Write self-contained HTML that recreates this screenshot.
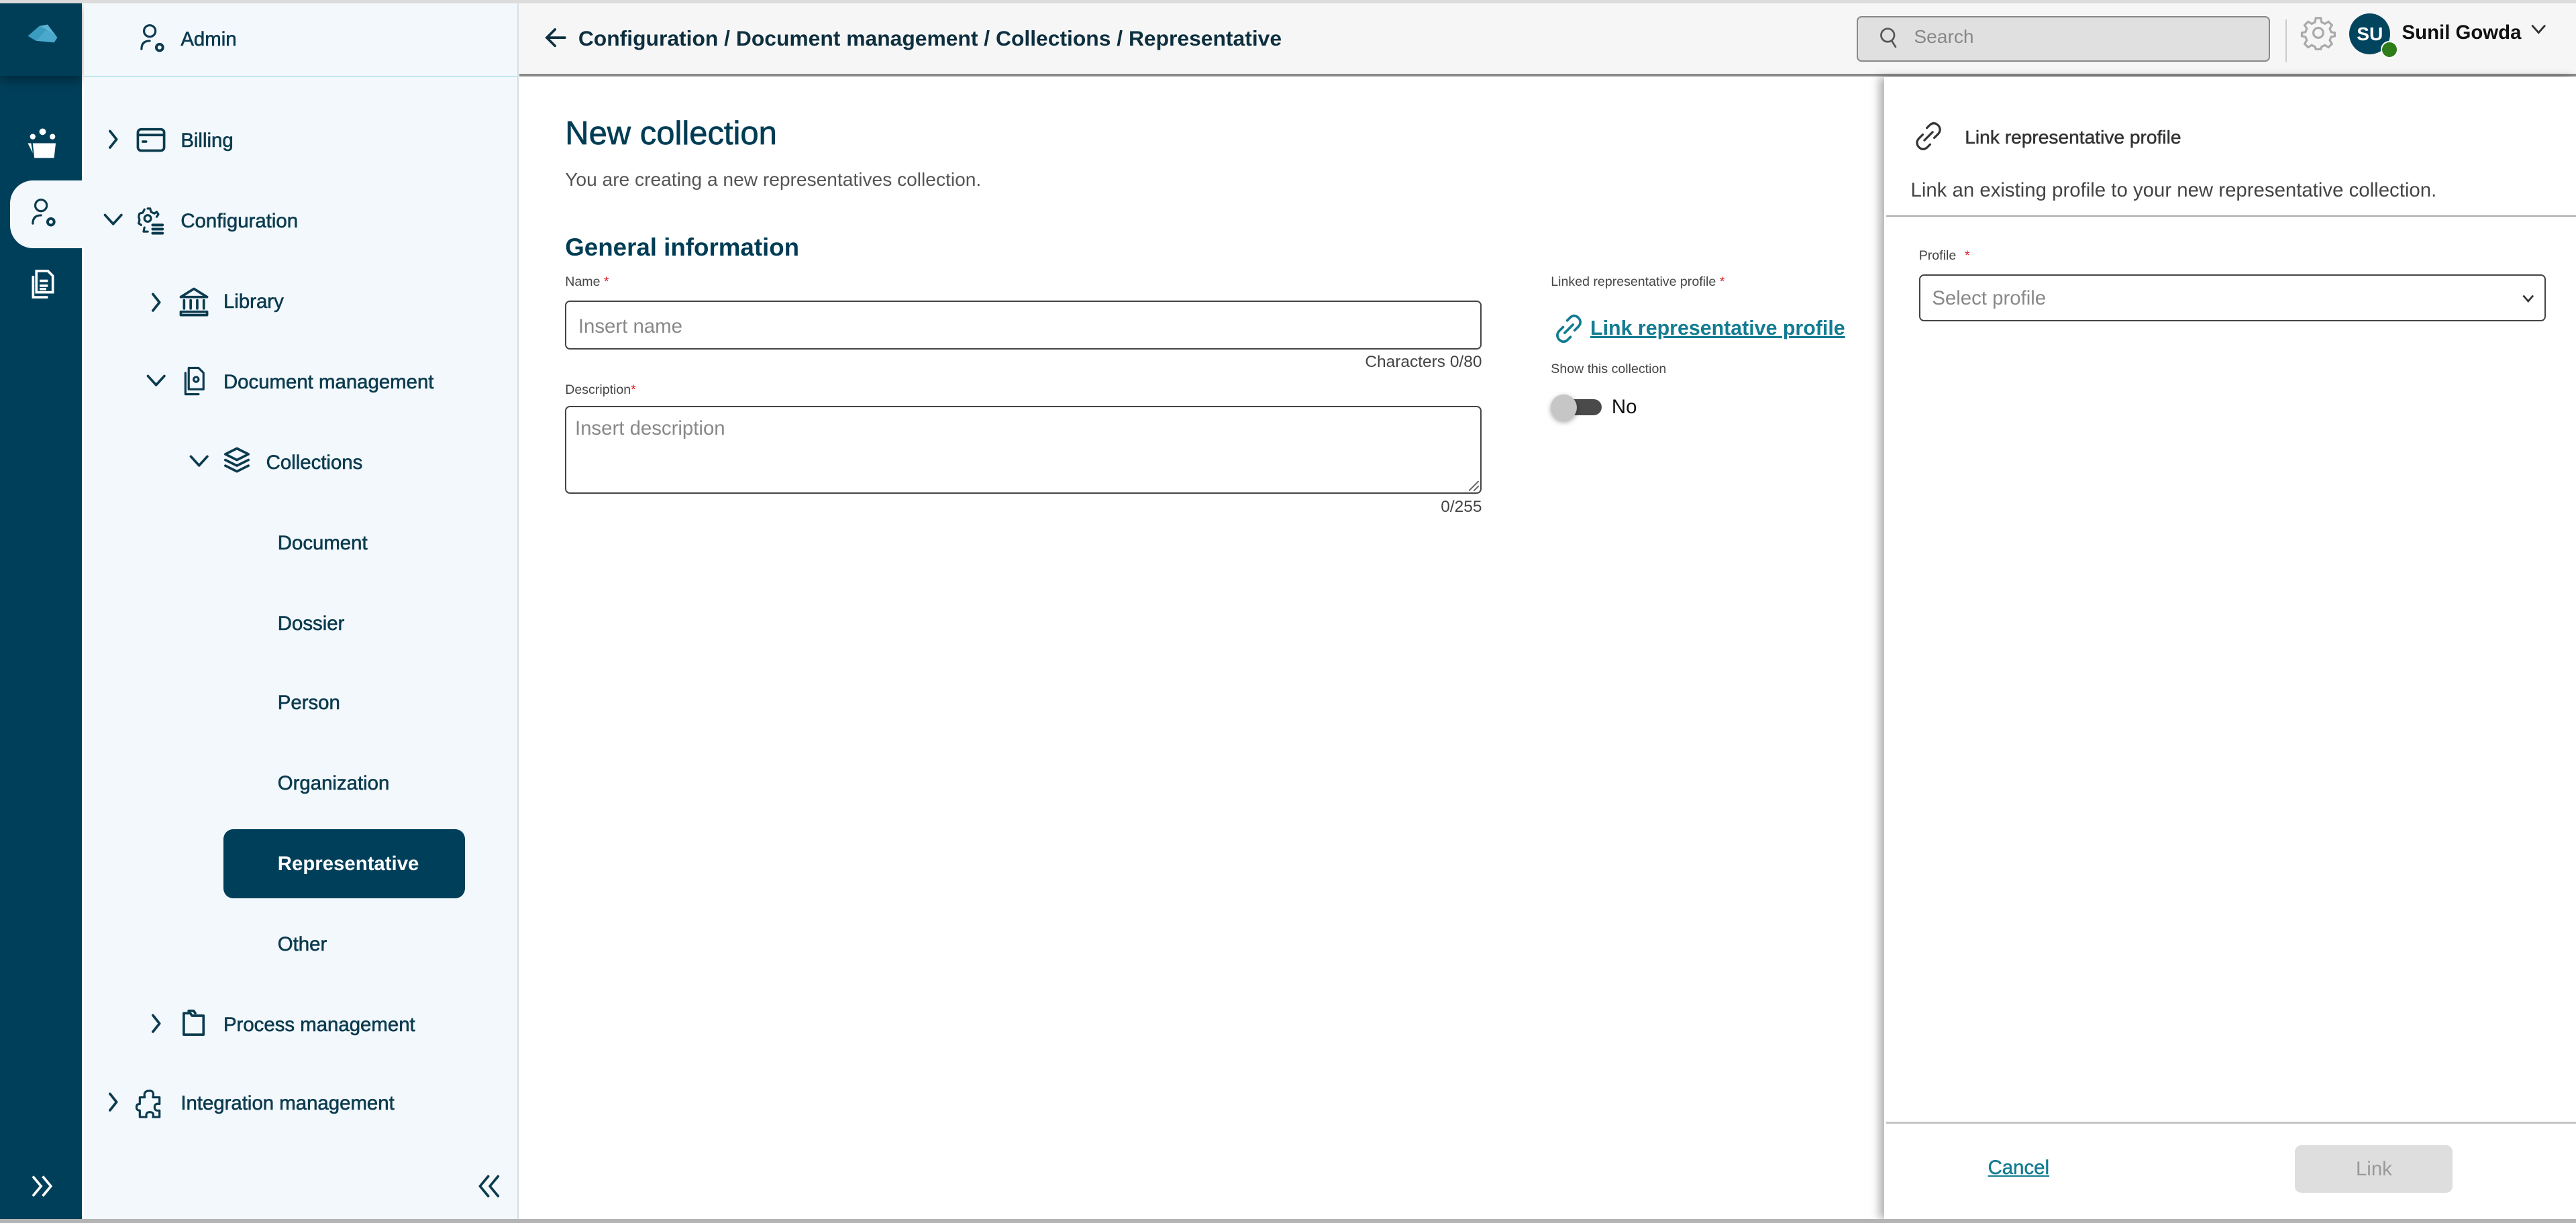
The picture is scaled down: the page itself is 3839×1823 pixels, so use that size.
<!DOCTYPE html>
<html><head><meta charset="utf-8"><style>
html,body{margin:0;padding:0;width:3839px;height:1823px;overflow:hidden;background:#fff;font-family:"Liberation Sans",sans-serif}
#w{zoom:2.4484;position:relative;width:1568px;height:745px;overflow:hidden;background:#fff}
.a{position:absolute}
.nav{color:#0b3b4f;font-size:12px;font-weight:400;white-space:nowrap;line-height:14px;margin-top:1px;-webkit-text-stroke:0.25px #0b3b4f}
.ic{position:absolute;fill:none;stroke:#0b3b4f;stroke-width:1.5;stroke-linecap:round;stroke-linejoin:round}
.lbl{font-size:8px;color:#444}
.req{color:#e0202a;font-size:8px;vertical-align:top}
</style></head><body><div id="w">
<div class="a" style="left:0;top:0;width:1568px;height:2px;background:#dcdcdc;z-index:5"></div>
<div class="a" style="left:0;top:0;width:50px;height:742px;background:#003f5a"></div>
<div class="a" style="left:0;top:0;width:50px;height:46px;background:#003e58;box-shadow:0 3px 6px rgba(0,0,0,.35)"></div>
<svg class="a" style="left:16px;top:14px" width="20" height="16" viewBox="0 0 20 16"><path d="M1 8 L8 2 L12 4 L6 11Z" fill="#3a9cc0"/><path d="M8 2 L13 1 L19 9 L12 4Z" fill="#5cb4d4"/><path d="M6 11 L12 4 L19 9 L17 12 Z" fill="#4aa8cc"/></svg>
<svg class="a" style="left:16px;top:77px" width="20" height="20" viewBox="0 0 20 20"><circle cx="10" cy="3" r="2" fill="#fff"/><circle cx="4" cy="6" r="1.7" fill="#fff"/><circle cx="16" cy="6" r="1.7" fill="#fff"/><path d="M4 10 H18 L17 19 H5Z" fill="#fff"/><path d="M1 10 H3 L4 16Z" fill="#fff"/></svg>
<div class="a" style="left:6px;top:110px;width:45px;height:41px;background:#f3f8fc;border-radius:14px 0 0 14px"></div>
<svg class="ic" style="left:18px;top:120px;stroke-width:1.3" width="18" height="20" viewBox="0 0 18 20"><circle cx="7" cy="5" r="3.5"/><path d="M2 16 Q2 11 7 11"/><circle cx="13" cy="15" r="2" stroke-width="1.6"/></svg>
<svg class="a" style="left:17px;top:163px" width="18" height="20" viewBox="0 0 18 20" fill="none" stroke="#fff" stroke-width="1.5"><path d="M5 2 H12 L15 5 V15 H5Z"/><path d="M3 5 V18 H12"/><path d="M7 8 H12 M7 11 H12 M7 13 H11"/></svg>
<svg class="a" style="left:18px;top:715px" width="16" height="14" viewBox="0 0 16 14" fill="none" stroke="#fff" stroke-width="1.5"><path d="M2 1 L7 7 L2 13 M8 1 L13 7 L8 13"/></svg>
<div class="a" style="left:51px;top:0;width:264px;height:742px;background:#f3f8fc;border-right:1px solid #d8dde0"></div>
<div class="a" style="left:51px;top:46px;width:264px;height:1px;background:#c2e5f0"></div>
<svg class="ic" style="left:84px;top:14px;stroke-width:1.3" width="18" height="20" viewBox="0 0 18 20"><circle cx="7" cy="5" r="3.5"/><path d="M2 16 Q2 11 7 11"/><circle cx="13" cy="15" r="2" stroke-width="1.6"/></svg>
<div class="a nav" style="left:110px;top:16px">Admin</div>

<svg class="ic" style="left:65px;top:79px" width="8" height="12" viewBox="0 0 8 12"><path d="M2 1 L6 6 L2 11"/></svg>
<svg class="ic" style="left:83px;top:77px" width="18" height="16" viewBox="0 0 18 16"><rect x="1" y="1.5" width="16" height="13" rx="2"/><path d="M1 5 H17 M4 9 H6"/></svg>
<div class="a nav" style="left:110px;top:78px">Billing</div>

<svg class="ic" style="left:63px;top:130px" width="12" height="8" viewBox="0 0 12 8"><path d="M1 1 L6 6.5 L11 1"/></svg>
<svg class="ic" style="left:83px;top:125px;stroke-width:1.3" width="18" height="19" viewBox="0 0 18 19"><circle cx="7" cy="8" r="2"/><path d="M7 2 L8.5 2 L9 4 L11 5 L12.5 4 L13.5 5.5 L12.5 7 M3 12 L1.5 11 L2 9 L1.5 7 L2 5 L4 4.5 L5 2.5 M5 13.5 L4.5 16 L7 16"/><path d="M10 12 H16 M10 14.5 H16 M10 17 H16" stroke-width="1.6"/></svg>
<div class="a nav" style="left:110px;top:127px">Configuration</div>

<svg class="ic" style="left:91px;top:178px" width="8" height="12" viewBox="0 0 8 12"><path d="M2 1 L6 6 L2 11"/></svg>
<svg class="ic" style="left:109px;top:175px" width="18" height="18" viewBox="0 0 18 18"><path d="M1 6 L9 1 L17 6 Z M3 8 V13 M7 8 V13 M11 8 V13 M15 8 V13"/><rect x="1" y="15" width="16" height="2"/></svg>
<div class="a nav" style="left:136px;top:176px">Library</div>

<svg class="ic" style="left:89px;top:228px" width="12" height="8" viewBox="0 0 12 8"><path d="M1 1 L6 6.5 L11 1"/></svg>
<svg class="ic" style="left:110px;top:223px;stroke-width:1.3" width="16" height="19" viewBox="0 0 16 19"><path d="M5 1 H11 L14 4 V14 H5Z"/><path d="M3 4 V17 H11"/><circle cx="9.5" cy="8" r="1.5"/></svg>
<div class="a nav" style="left:136px;top:225px">Document management</div>

<svg class="ic" style="left:115px;top:277px" width="12" height="8" viewBox="0 0 12 8"><path d="M1 1 L6 6.5 L11 1"/></svg>
<svg class="ic" style="left:135px;top:272px" width="18" height="18" viewBox="0 0 18 18"><path d="M9 1 L16 4.5 L9 8 L2 4.5Z M2 8 L9 11.5 L16 8 M2 11.5 L9 15 L16 11.5"/></svg>
<div class="a nav" style="left:162px;top:274px">Collections</div>

<div class="a nav" style="left:169px;top:323px">Document</div>
<div class="a nav" style="left:169px;top:372px">Dossier</div>
<div class="a nav" style="left:169px;top:420px">Person</div>
<div class="a nav" style="left:169px;top:469px">Organization</div>
<div class="a" style="left:136px;top:505px;width:147px;height:42px;background:#003f5a;border-radius:6px"></div>
<div class="a nav" style="left:169px;top:518px;color:#fff;font-weight:700;-webkit-text-stroke:0">Representative</div>
<div class="a nav" style="left:169px;top:567px">Other</div>

<svg class="ic" style="left:91px;top:617px" width="8" height="12" viewBox="0 0 8 12"><path d="M2 1 L6 6 L2 11"/></svg>
<svg class="ic" style="left:110px;top:614px" width="16" height="18" viewBox="0 0 16 18"><path d="M2 3 H6 L7 4.5 H14 V16 H2Z"/><path d="M5 3 V1.5 H8 L9 3" /></svg>
<div class="a nav" style="left:136px;top:616px">Process management</div>

<svg class="ic" style="left:65px;top:665px" width="8" height="12" viewBox="0 0 8 12"><path d="M2 1 L6 6 L2 11"/></svg>
<svg class="ic" style="left:82px;top:662px;stroke-width:1.3" width="18" height="20" viewBox="0 0 18 20"><path d="M3 6 H6 Q5 2 9 2 Q12 2 11 6 H15 V10 Q12 9.5 12 12 Q12 14.5 15 14 V18 H11 Q12 15 9 15 Q6.5 15 7 18 H3 V14 Q1 14 1 12 Q1 10 3 10Z"/></svg>
<div class="a nav" style="left:110px;top:664px">Integration management</div>

<svg class="ic" style="left:289px;top:715px" width="16" height="14" viewBox="0 0 16 14"><path d="M8 1 L3 7 L8 13 M14 1 L9 7 L14 13"/></svg>

<div class="a" style="left:316px;top:0;width:1252px;height:45px;background:#f6f6f6;border-bottom:2px solid #8a8a8a"></div>
<svg class="a" style="left:331px;top:16px" width="14" height="14" viewBox="0 0 14 14" fill="none" stroke="#0d2f3f" stroke-width="1.5" stroke-linecap="round"><path d="M13 7 H2 M7 2 L2 7 L7 12"/></svg>
<div class="a" style="left:352px;top:16px;font-size:13px;font-weight:700;color:#0d2f3f;white-space:nowrap">Configuration / Document management / Collections / Representative</div>
<div class="a" style="left:1130px;top:10px;width:250px;height:26px;background:#e0e0e0;border:1px solid #888;border-radius:3px"></div>
<svg class="a" style="left:1144px;top:16px" width="12" height="14" viewBox="0 0 12 14" fill="none" stroke="#555" stroke-width="1.1"><circle cx="5" cy="5.5" r="4"/><path d="M7.5 9 L10 13"/></svg>
<div class="a" style="left:1165px;top:16px;font-size:11.5px;color:#888">Search</div>
<div class="a" style="left:1391px;top:12px;width:1px;height:26px;background:#ccc"></div>
<svg class="a" style="left:1400px;top:9px" width="22" height="22" viewBox="0 0 22 22" fill="none" stroke="#aaa" stroke-width="1.3"><circle cx="11" cy="11" r="3"/><path d="M9.5 2 H12.5 L13 4.5 L15 5.5 L17.2 4.2 L19.3 6.3 L18 8.5 L18.8 10.5 L21 11 V13 L18.8 13.5 L18 15.5 L19.3 17.7 L17.2 19.8 L15 18.5 L13 19.5 L12.5 21 H9.5 L9 19.5 L7 18.5 L4.8 19.8 L2.7 17.7 L4 15.5 L3.2 13.5 L1 13 V11 L3.2 10.5 L4 8.5 L2.7 6.3 L4.8 4.2 L7 5.5 L9 4.5Z"/></svg>
<div class="a" style="left:1430px;top:8px;width:25px;height:25px;border-radius:50%;background:#00445e;color:#fff;font-size:11.5px;font-weight:700;text-align:center;line-height:25px">SU</div>
<div class="a" style="left:1449px;top:25px;width:9px;height:9px;border-radius:50%;background:#2f7d1a;border:1px solid #fff"></div>
<div class="a" style="left:1462px;top:13px;font-size:12px;font-weight:700;color:#111">Sunil Gowda</div>
<svg class="a" style="left:1540px;top:14px" width="10" height="8" viewBox="0 0 10 8" fill="none" stroke="#333" stroke-width="1.2"><path d="M1 1.5 L5 6 L9 1.5"/></svg>

<div class="a" style="left:344px;top:70px;font-size:20px;color:#003d55;-webkit-text-stroke:0.3px #003d55">New collection</div>
<div class="a" style="left:344px;top:103px;font-size:11.5px;color:#555">You are creating a new representatives collection.</div>
<div class="a" style="left:344px;top:142px;font-size:15px;color:#003d55;font-weight:600">General information</div>
<div class="a lbl" style="left:344px;top:167px">Name <span class="req">*</span></div>
<div class="a" style="left:344px;top:183px;width:556px;height:28px;border:1px solid #444;border-radius:3px"></div>
<div class="a" style="left:352px;top:192px;font-size:12px;color:#888">Insert name</div>
<div class="a" style="left:780px;top:215px;width:122px;text-align:right;font-size:10px;color:#444">Characters 0/80</div>
<div class="a lbl" style="left:344px;top:233px">Description<span class="req" style="vertical-align:baseline">*</span></div>
<div class="a" style="left:344px;top:247px;width:556px;height:52px;border:1px solid #444;border-radius:3px"></div>
<div class="a" style="left:350px;top:254px;font-size:12px;color:#888">Insert description</div>
<svg class="a" style="left:894px;top:293px" width="6" height="6" viewBox="0 0 6 6" stroke="#666" stroke-width=".8"><path d="M0 6 L6 0 M3 6 L6 3"/></svg>
<div class="a" style="left:800px;top:303px;width:102px;text-align:right;font-size:10px;color:#444">0/255</div>

<div class="a lbl" style="left:944px;top:167px">Linked representative profile <span class="req">*</span></div>
<svg class="a" style="left:946px;top:191px" width="18" height="18" viewBox="0 0 18 18" fill="none" stroke="#137c92" stroke-width="1.5" stroke-linecap="round"><path d="M8 4 L10 2 Q12.5 0 15 2.5 Q17 5 15 7.5 L12.5 10 M10 14 L8 16 Q5.5 18 3 15.5 Q1 13 3 10.5 L5.5 8 M6.5 11.5 L11.5 6.5"/></svg>
<div class="a" style="left:968px;top:193px;font-size:12.4px;font-weight:700;color:#137c92;text-decoration:underline;white-space:nowrap">Link representative profile</div>
<div class="a lbl" style="left:944px;top:220px">Show this collection</div>
<div class="a" style="left:950px;top:243px;width:25px;height:10px;border-radius:5px;background:#4a4a4a"></div>
<div class="a" style="left:944px;top:240px;width:16px;height:16px;border-radius:50%;background:#c6c6c6;box-shadow:0 1px 3px rgba(0,0,0,.35)"></div>
<div class="a" style="left:981px;top:241px;font-size:12px;color:#111">No</div>

<div class="a" style="left:1147px;top:47px;width:421px;height:695px;background:#fff;box-shadow:-3px 0 5px rgba(0,0,0,.3)"></div>
<svg class="a" style="left:1165px;top:74px" width="18" height="18" viewBox="0 0 18 18" fill="none" stroke="#333" stroke-width="1.3" stroke-linecap="round"><path d="M8 4 L10 2 Q12.5 0 15 2.5 Q17 5 15 7.5 L12.5 10 M10 14 L8 16 Q5.5 18 3 15.5 Q1 13 3 10.5 L5.5 8 M6.5 11.5 L11.5 6.5"/></svg>
<div class="a" style="left:1196px;top:77px;font-size:11.5px;color:#333;-webkit-text-stroke:0.2px #333">Link representative profile</div>
<div class="a" style="left:1163px;top:109px;font-size:12px;color:#444">Link an existing profile to your new representative collection.</div>
<div class="a" style="left:1148px;top:131px;width:420px;height:1px;background:#aaa"></div>
<div class="a lbl" style="left:1168px;top:151px">Profile <span class="req" style="margin-left:3px">*</span></div>
<div class="a" style="left:1168px;top:167px;width:380px;height:27px;border:1px solid #444;border-radius:3px"></div>
<div class="a" style="left:1176px;top:175px;font-size:12px;color:#888">Select profile</div>
<svg class="a" style="left:1535px;top:179px" width="8" height="6" viewBox="0 0 8 6" fill="none" stroke="#333" stroke-width="1.1"><path d="M1 1 L4 4.5 L7 1"/></svg>
<div class="a" style="left:1148px;top:683px;width:420px;height:1px;background:#c4c4c4"></div>
<div class="a" style="left:1210px;top:704px;font-size:12px;color:#137c92;text-decoration:underline;-webkit-text-stroke:0.2px #137c92">Cancel</div>
<div class="a" style="left:1397px;top:697px;width:96px;height:29px;background:#dedede;border-radius:4px;color:#999;font-size:12px;text-align:center;line-height:29px">Link</div>

<div class="a" style="left:0;top:742px;width:1568px;height:3px;background:#b4b4b4"></div>
</div></body></html>
